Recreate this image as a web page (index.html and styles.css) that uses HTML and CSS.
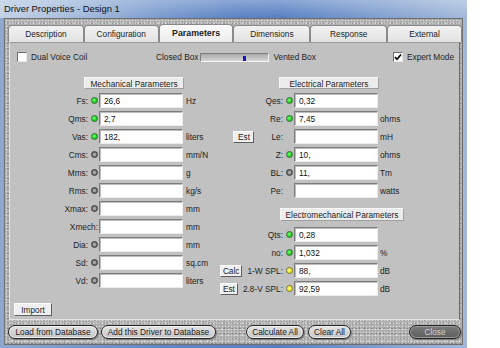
FILE: index.html
```html
<!DOCTYPE html>
<html lang="en">
<head>
  <meta charset="UTF-8">
  <title>Driver Properties - Design 1</title>
  <link rel="stylesheet" href="styles.css">
</head>
<body>
<div class="window">
  <div class="titlebar">Driver Properties - Design 1</div>

  <div class="frame">
    <div class="tabs">
      <div class="tab t1">Description</div>
      <div class="tab t2">Configuration</div>
      <div class="tab t3 active">Parameters</div>
      <div class="tab t4">Dimensions</div>
      <div class="tab t5">Response</div>
      <div class="tab t6">External</div>
    </div>

    <div class="panel">
      <div class="toprow">
        <div class="dvc">
          <span class="chk"></span>
          <span>Dual Voice Coil</span>
        </div>
        <div class="boxtype">
          <span>Closed Box</span>
          <span class="track"><span class="thumb"></span></span>
          <span>Vented Box</span>
        </div>
        <div class="expert">
          <span class="chk">
            <svg width="8" height="8" viewBox="0 0 8 8"><path d="M1 4 L3 6.2 L7 1.5" fill="none" stroke="#000" stroke-width="1.7"/></svg>
          </span>
          <span>Expert Mode</span>
        </div>
      </div>

      <div class="params">
        <!-- mechanical -->
        <div class="col mech">
          <div class="group-title">Mechanical Parameters</div>
          <div class="rows">
            <div class="row"><div class="lab">Fs:<span class="dot on"></span></div><input class="field" value="26,6"><span class="unit">Hz</span></div>
            <div class="row"><div class="lab">Qms:<span class="dot on"></span></div><input class="field" value="2,7"><span class="unit"></span></div>
            <div class="row"><div class="lab">Vas:<span class="dot on"></span></div><input class="field" value="182,"><span class="unit">liters</span></div>
            <div class="row"><div class="lab">Cms:<span class="dot off"></span></div><input class="field" value=""><span class="unit">mm/N</span></div>
            <div class="row"><div class="lab">Mms:<span class="dot off"></span></div><input class="field" value=""><span class="unit">g</span></div>
            <div class="row"><div class="lab">Rms:<span class="dot off"></span></div><input class="field" value=""><span class="unit">kg/s</span></div>
            <div class="row"><div class="lab">Xmax:<span class="dot off"></span></div><input class="field" value=""><span class="unit">mm</span></div>
            <div class="row"><div class="lab">Xmech:</div><input class="field" value=""><span class="unit">mm</span></div>
            <div class="row"><div class="lab">Dia:<span class="dot off"></span></div><input class="field" value=""><span class="unit">mm</span></div>
            <div class="row"><div class="lab">Sd:<span class="dot off"></span></div><input class="field" value=""><span class="unit">sq.cm</span></div>
            <div class="row"><div class="lab">Vd:<span class="dot off"></span></div><input class="field" value=""><span class="unit">liters</span></div>
          </div>
        </div>

        <!-- electrical + electromechanical -->
        <div class="col elec">
          <div class="group-title">Electrical Parameters</div>
          <div class="rows">
            <div class="row"><div class="lab">Qes:<span class="dot on"></span></div><input class="field" value="0,32"><span class="unit"></span></div>
            <div class="row"><div class="lab">Re:<span class="dot on"></span></div><input class="field" value="7,45"><span class="unit">ohms</span></div>
            <div class="row"><div class="lab"><button class="sbtn est-le">Est</button>Le:<span class="dot none"></span></div><input class="field" value=""><span class="unit">mH</span></div>
            <div class="row"><div class="lab">Z:<span class="dot on"></span></div><input class="field" value="10,"><span class="unit">ohms</span></div>
            <div class="row"><div class="lab">BL:<span class="dot off"></span></div><input class="field" value="11,"><span class="unit">Tm</span></div>
            <div class="row"><div class="lab">Pe:<span class="dot none"></span></div><input class="field" value=""><span class="unit">watts</span></div>
          </div>

          <div class="group-title wide">Electromechanical Parameters</div>
          <div class="rows">
            <div class="row"><div class="lab">Qts:<span class="dot on"></span></div><input class="field" value="0,28"><span class="unit"></span></div>
            <div class="row"><div class="lab">no:<span class="dot on"></span></div><input class="field" value="1,032"><span class="unit">%</span></div>
            <div class="row"><div class="lab"><button class="sbtn">Calc</button>1-W SPL:<span class="dot warn"></span></div><input class="field" value="88,"><span class="unit">dB</span></div>
            <div class="row"><div class="lab"><button class="sbtn">Est</button>2.8-V SPL:<span class="dot warn"></span></div><input class="field" value="92,59"><span class="unit">dB</span></div>
          </div>
        </div>
      </div>

      <button class="sbtn import">Import</button>
    </div>

    <div class="bottombar">
      <button class="pill load">Load from Database</button>
      <button class="pill add">Add this Driver to Database</button>
      <button class="pill calc">Calculate All</button>
      <button class="pill clear">Clear All</button>
      <button class="pill close">Close</button>
    </div>
  </div>
</div>
</body>
</html>
```

FILE: styles.css
```css
* {
  margin: 0;
  padding: 0;
  box-sizing: border-box;
}
body {
  background: #fff;
  font-family: "Liberation Sans", Arial, sans-serif;
  font-size: 8.3px;
  color: #1e1e1e;
  width: 500px;
  height: 348px;
  overflow: hidden;
}

.window {
  width: 467px;
  height: 348px;
  display: flex;
  flex-direction: column;
  background: linear-gradient(to right, #8ea8d0, #5f86c5 35%, #567fc2 60%, #a2b9da);
}
.titlebar {
  height: 18px;
  padding-left: 4px;
  line-height: 18px;
  font-size: 9.4px;
  color: #101010;
  background: linear-gradient(to right, rgba(215,226,240,.7), rgba(200,215,235,.3) 30%, transparent 50%),
              linear-gradient(to bottom, rgba(255,255,255,.3), rgba(255,255,255,0));
}

/* granite look */
.frame {
  flex: 1;
  margin: 0 4px 3px 4px;
  padding: 5px 0 0 3px;
  border: 1px solid #6f6f6f;
  background-color: #acacac;
  background-image:
    radial-gradient(circle, rgba(255,255,255,.55) 0 .7px, transparent 1.1px),
    radial-gradient(circle, rgba(50,50,50,.35) 0 .7px, transparent 1.1px),
    radial-gradient(circle, rgba(255,255,255,.35) 0 .9px, transparent 1.3px),
    radial-gradient(circle, rgba(40,40,40,.25) 0 .6px, transparent 1px);
  background-size: 3px 3px, 4px 5px, 7px 6px, 5px 7px;
  background-position: 0 0, 1px 2px, 3px 1px, 2px 4px;
  display: flex;
  flex-direction: column;
}

.tabs {
  display: flex;
  align-items: flex-end;
  height: 18px;
}
.tab {
  height: 17px;
  line-height: 16px;
  text-align: center;
  background: linear-gradient(#f2f2f2, #e2e2e2);
  border: 1px solid #8a8a8a;
  border-bottom: none;
  border-radius: 4px 4px 0 0;
  color: #222;
}
.tab.active {
  height: 18px;
  font-weight: bold;
  font-size: 8.8px;
  background: linear-gradient(#fafafa, #ececec);
}
.t1 { width: 76px; }
.t2 { width: 75px; }
.t3 { width: 75px; }
.t4 { width: 77px; }
.t5 { width: 77px; }
.t6 { width: 75px; }

.panel {
  width: 451px;
  height: 278px;
  margin-left: 1px;
  background: #c1c1c1;
  border: 1px solid;
  border-color: #9a9a9a #6a6a6a #e4e4e4 #e4e4e4;
  display: flex;
  flex-direction: column;
  align-items: flex-start;
}

.toprow {
  margin-top: 9px;
  padding-left: 7px;
  height: 10px;
  width: 100%;
  display: flex;
  align-items: center;
}
.dvc {
  width: 139px;
  display: flex;
  align-items: center;
  gap: 4px;
}
.chk {
  width: 10px;
  height: 10px;
  background: #fff;
  border: 1px solid;
  border-color: #6d6d6d #e8e8e8 #e8e8e8 #6d6d6d;
  display: flex;
  align-items: center;
  justify-content: center;
}
.boxtype {
  display: flex;
  align-items: center;
  gap: 2px;
}
.track {
  position: relative;
  width: 69px;
  height: 9px;
  margin-right: 2px;
  border: 1px solid;
  border-color: #7e7e7e #f4f4f4 #f4f4f4 #7e7e7e;
  background: linear-gradient(#a9a9a9, #d6d6d6);
}
.thumb {
  position: absolute;
  left: 42px;
  top: 2px;
  width: 3px;
  height: 5px;
  background: #1616c8;
}
.expert {
  margin-left: auto;
  padding-right: 5px;
  display: flex;
  align-items: center;
  gap: 4px;
}

.params {
  margin-top: 15px;
  display: flex;
}
.col.mech {
  margin-left: 21px;
  width: 183px;
}
.col.elec {
  width: 200px;
}

.group-title {
  width: 100px;
  height: 12px;
  line-height: 12px;
  margin-bottom: 4px;
  text-align: center;
  background: #ececec;
  border: 1px solid;
  border-color: #f8f8f8 #a0a0a0 #a0a0a0 #f8f8f8;
  color: #222;
}
.mech .group-title { margin-left: 53px; }
.elec .group-title { margin-left: 65px; }
.elec .group-title.wide {
  width: 124px;
  margin-left: 66px;
  margin-top: 10px;
  margin-bottom: 6px;
  height: 13px;
  line-height: 13px;
}

.rows {
  display: flex;
  flex-direction: column;
  gap: 3px;
}
.row {
  height: 15px;
  display: flex;
  align-items: center;
}
.lab {
  display: flex;
  justify-content: flex-end;
  align-items: center;
  gap: 3px;
  padding-right: 1px;
  white-space: nowrap;
}
.mech .lab { width: 68px; }
.elec .lab { width: 80px; }

.dot {
  width: 7px;
  height: 7px;
  border-radius: 50%;
  border: 1px solid #333;
}
.dot.on {
  background: radial-gradient(circle at 40% 40%, #7dff7d, #19d219 60%);
  border-color: #2f6f2f;
}
.dot.off {
  background: radial-gradient(circle, #a8a8a8 0 1.2px, #6e6e6e 2px);
  border-color: #3a3a3a;
}
.dot.warn {
  background: radial-gradient(circle at 40% 40%, #ffff9a, #ecec10 60%);
  border-color: #76762a;
}
.dot.none {
  visibility: hidden;
}

.field {
  width: 84px;
  height: 15px;
  padding: 0 4px;
  background: #fff;
  border: 1px solid;
  border-color: #7c7c7c #ececec #ececec #7c7c7c;
  box-shadow: inset 1px 1px 0 #bdbdbd;
  font-family: "Liberation Sans", Arial, sans-serif;
  font-size: 8.3px;
  color: #111;
  outline: none;
}
.unit {
  margin-left: 3px;
  color: #222;
}
.elec .unit { margin-left: 2px; }

.sbtn {
  height: 12px;
  padding: 0 2px;
  background: #efefef;
  border: 1px solid;
  border-color: #fbfbfb #5e5e5e #5e5e5e #fbfbfb;
  font-family: "Liberation Sans", Arial, sans-serif;
  font-size: 8.3px;
  line-height: 10px;
  color: #222;
  margin-right: 2px;
}
.est-le {
  width: 21px;
  margin-right: 14px;
}
.import {
  margin: 7px 0 0 4px;
  width: 38px;
  height: 13px;
}

.bottombar {
  display: flex;
  align-items: center;
  padding-top: 5px;
}
.pill {
  height: 14px;
  border: 1.5px solid #262626;
  border-radius: 8px;
  background: linear-gradient(#e4e4e4, #c4c4c4);
  box-shadow: inset 0 0 0 1px #f0f0f0, 1px 1px 0 #7a7a7a;
  font-family: "Liberation Sans", Arial, sans-serif;
  font-size: 8.3px;
  line-height: 10px;
  color: #202020;
}
.load { width: 90px; margin-left: 0; }
.add { width: 115px; margin-left: 3px; }
.calc { width: 58px; margin-left: 30px; }
.clear { width: 43px; margin-left: 4px; }
.close {
  width: 52px;
  margin-left: 58px;
  background: linear-gradient(#7c7c7c, #5c5c5c);
  box-shadow: inset 0 0 0 1px #9a9a9a, 1px 1px 0 #7a7a7a;
  color: #d2d2d2;
}
```
